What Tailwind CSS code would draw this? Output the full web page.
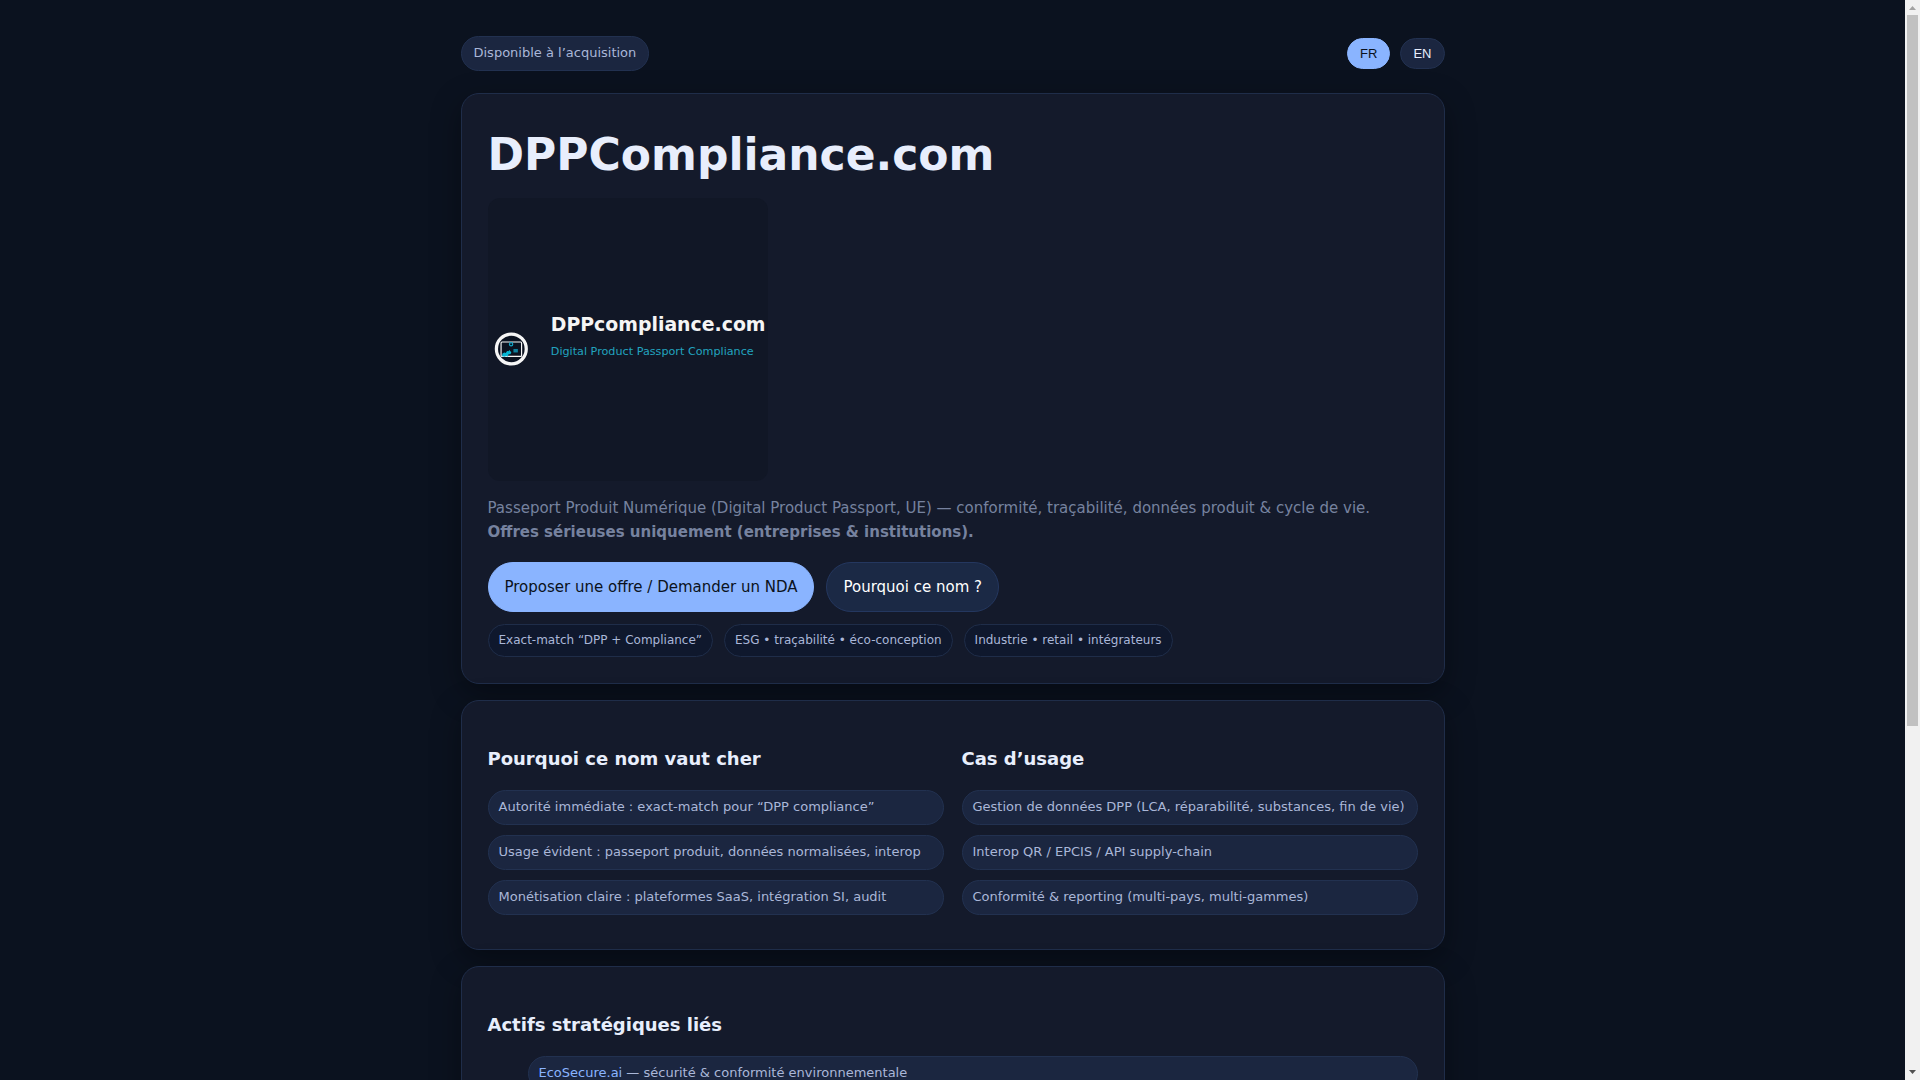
<!DOCTYPE html>
<html lang="fr">
<head>
    <meta charset="UTF-8">
    <meta name="viewport" content="width=device-width, initial-scale=1.0">
    <title>DPPCompliance.com</title>
    <script src="https://cdn.jsdelivr.net/npm/@tailwindcss/browser@4"></script>
</head>
<body class="flex h-screen overflow-hidden bg-[#0b121f] font-['DejaVu_Sans',sans-serif] text-[15px] leading-6 text-[#e8eefc]">
    <div class="flex-1 overflow-hidden">
        <div class="max-w-[1024px] mx-auto px-5 py-9">
            <!-- Top bar -->
            <header class="flex items-center justify-between mb-[22px]">
                <span class="rounded-full border border-[#223150] bg-[#1b2640] px-3 pt-[5px] pb-[7px] text-[13px] leading-[21px] text-[#aab7d8]">Disponible à l’acquisition</span>
                <div class="flex gap-[10px] font-['Liberation_Sans',sans-serif] text-[13px] leading-[15px]">
                    <button id="btn-fr" class="rounded-full border border-[#8ab4ff] bg-[#8ab4ff] px-3 py-[7px] text-[#0b1220]">FR</button>
                    <button id="btn-en" class="rounded-full border border-[#223150] bg-[#1b2640] px-3 py-[7px] text-[#e8eefc]">EN</button>
                </div>
            </header>

            <!-- Hero -->
            <section class="mb-4 rounded-[18px] border border-[#1f2d49] bg-[#141a2b] p-[26px] shadow-[0_10px_30px_rgba(0,0,0,0.35)]">
                <h1 class="mb-2 text-[44px] leading-[70px] font-bold">DPPCompliance.com</h1>
                <svg class="block w-[280px] rounded-xl bg-[#111726]" viewBox="0 0 1200 1213" role="img" aria-label="DPPcompliance.com">
                    <circle cx="100" cy="647" r="64" fill="#0b1220" stroke="#f5f5f5" stroke-width="14"/>
                    <rect x="56" y="617" width="88" height="62" rx="4" fill="none" stroke="#f5f5f5" stroke-width="5"/>
                    <circle cx="99" cy="627" r="7" fill="none" stroke="#12a5c8" stroke-width="5"/>
                    <rect x="109" y="647" width="19" height="15" fill="#0e7f9d"/>
                    <path d="M60 678 L62 666 L70 662 L76 664 L82 656 L88 657 L92 651 L97 658 L100 662 L96 670 L88 670 L84 680 L78 677 L72 680 Z" fill="#06b6d4"/>
                    <text x="269" y="571" font-size="81" font-weight="700" fill="#f5f5f5">DPPcompliance.com</text>
                    <text x="269" y="674" font-size="48" fill="#22a3bf">Digital Product Passport Compliance</text>
                </svg>
                <p class="mt-[15px] mb-[18px] text-[#76829f]">
                    Passeport Produit Numérique (Digital Product Passport, UE) — conformité, traçabilité, données produit &amp; cycle de vie.<br>
                    <strong class="font-bold">Offres sérieuses uniquement (entreprises &amp; institutions).</strong>
                </p>
                <div class="flex flex-wrap gap-3 mb-3">
                    <a href="#contact" class="rounded-full border border-[#8ab4ff] bg-[#8ab4ff] px-4 py-3 text-[#0b1220]">Proposer une offre / Demander un NDA</a>
                    <a href="#pourquoi" class="rounded-full border border-[#24375f] bg-[#1b2945] px-4 py-3 text-white">Pourquoi ce nom ?</a>
                </div>
                <div class="flex flex-wrap gap-[11px] text-xs leading-[19px] text-[#aab7d8]">
                    <span class="rounded-full border border-[#1f2d49] bg-[#0f182d] px-[10px] py-[6px]">Exact-match “DPP + Compliance”</span>
                    <span class="rounded-full border border-[#1f2d49] bg-[#0f182d] px-[10px] py-[6px]">ESG • traçabilité • éco-conception</span>
                    <span class="rounded-full border border-[#1f2d49] bg-[#0f182d] px-[10px] py-[6px]">Industrie • retail • intégrateurs</span>
                </div>
            </section>

            <!-- Value and use cases -->
            <section id="pourquoi" class="mb-4 grid grid-cols-2 gap-[18px] rounded-[18px] border border-[#1f2d49] bg-[#141a2b] px-[26px] pt-[43px] pb-[34px] shadow-[0_10px_30px_rgba(0,0,0,0.35)]">
                <div>
                    <h2 class="mb-[17px] text-lg leading-[29px] font-bold">Pourquoi ce nom vaut cher</h2>
                    <ul class="grid gap-[10px] text-[13px] leading-[21px] text-[#aab7d8]">
                        <li class="rounded-full border border-[#223150] bg-[#1b2640] px-[10px] pt-[5px] pb-[7px]">Autorité immédiate : exact-match pour “DPP compliance”</li>
                        <li class="rounded-full border border-[#223150] bg-[#1b2640] px-[10px] pt-[5px] pb-[7px]">Usage évident : passeport produit, données normalisées, interop</li>
                        <li class="rounded-full border border-[#223150] bg-[#1b2640] px-[10px] pt-[5px] pb-[7px]">Monétisation claire : plateformes SaaS, intégration SI, audit</li>
                    </ul>
                </div>
                <div>
                    <h2 class="mb-[17px] text-lg leading-[29px] font-bold">Cas d’usage</h2>
                    <ul class="grid gap-[10px] text-[13px] leading-[21px] text-[#aab7d8]">
                        <li class="rounded-full border border-[#223150] bg-[#1b2640] px-[10px] pt-[5px] pb-[7px]">Gestion de données DPP (LCA, réparabilité, substances, fin de vie)</li>
                        <li class="rounded-full border border-[#223150] bg-[#1b2640] px-[10px] pt-[5px] pb-[7px]">Interop QR / EPCIS / API supply-chain</li>
                        <li class="rounded-full border border-[#223150] bg-[#1b2640] px-[10px] pt-[5px] pb-[7px]">Conformité &amp; reporting (multi-pays, multi-gammes)</li>
                    </ul>
                </div>
            </section>

            <!-- Related assets -->
            <section class="rounded-[18px] border border-[#1f2d49] bg-[#141a2b] px-[26px] pt-[43px] pb-[34px] shadow-[0_10px_30px_rgba(0,0,0,0.35)]">
                <h2 class="mb-[17px] text-lg leading-[29px] font-bold">Actifs stratégiques liés</h2>
                <ul class="grid gap-[10px] pl-10 text-[13px] leading-[21px] text-[#aab7d8]">
                    <li class="rounded-full border border-[#223150] bg-[#1b2640] px-[10px] pt-[5px] pb-[7px]"><a href="https://ecosecure.ai" class="text-[#8ab4ff]">EcoSecure.ai</a> — sécurité &amp; conformité environnementale</li>
                </ul>
            </section>
        </div>
    </div>

    <!-- Scrollbar -->
    <div class="flex w-[15px] flex-col items-center bg-[#f1f1f1]" aria-hidden="true">
        <svg class="h-[15px] w-[15px]" viewBox="0 0 15 15"><path d="M4 10 L7.5 6 L11 10 Z" fill="#a3a3a3"/></svg>
        <div class="h-[65.8%] w-[11px] bg-[#c1c1c1]"></div>
        <svg class="mt-auto h-[15px] w-[15px]" viewBox="0 0 15 15"><path d="M4 5 L7.5 9 L11 5 Z" fill="#505050"/></svg>
    </div>
</body>
</html>
